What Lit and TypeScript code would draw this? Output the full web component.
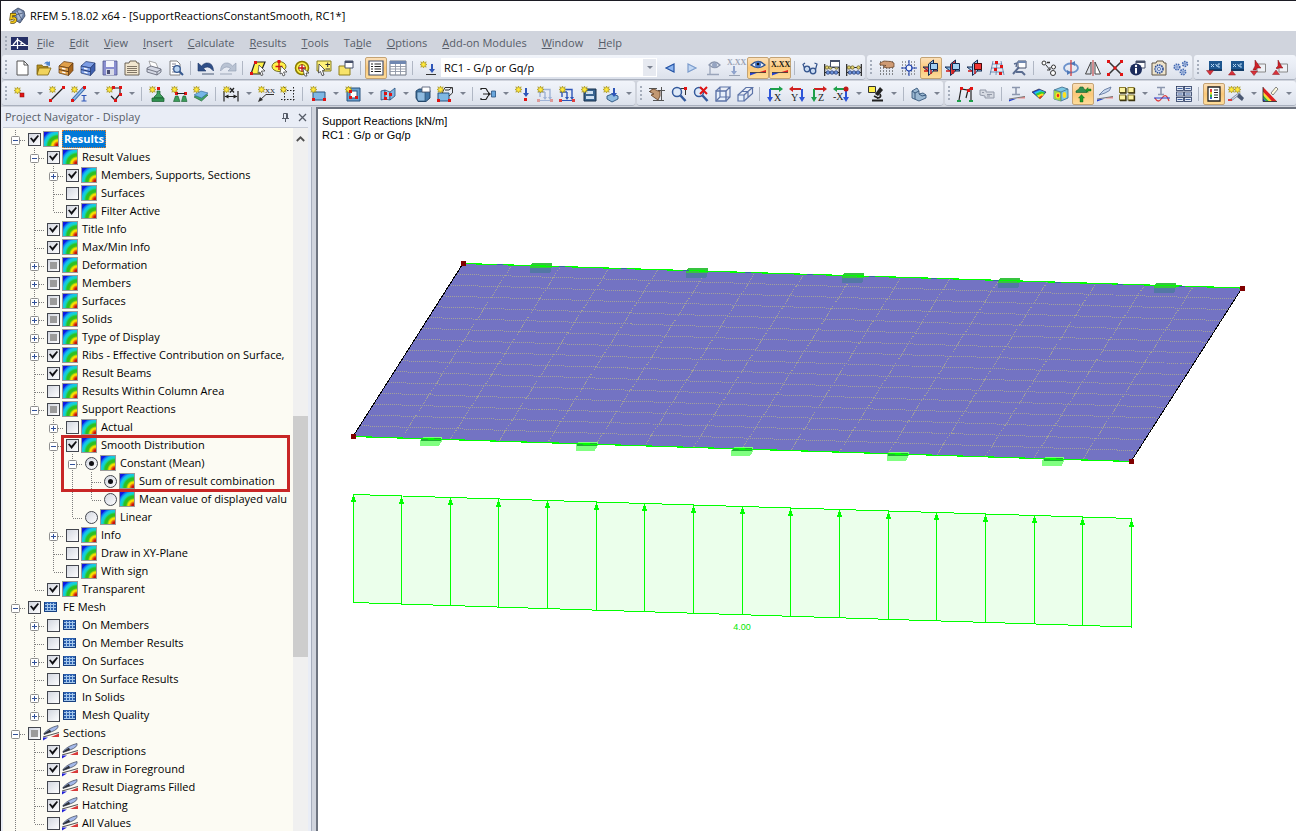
import { LitElement, html, svg, css, nothing } from "lit";
import { customElement, property, state } from "lit/decorators.js";
import { classMap } from "lit/directives/class-map.js";

/* ---------- icon building blocks (16 x 16 box) ---------- */

const star = (x: number, y: number) => svg`<path transform="translate(${x} ${y})" d="M3.5 0 L4.3 2 L6.2 .8 L5.2 2.8 L7 3.5 L5.2 4.3 L6.2 6.2 L4.3 5.2 L3.5 7 L2.7 5.2 L.8 6.2 L1.8 4.3 L0 3.5 L1.8 2.8 L.8 .8 L2.7 2 Z" fill="#ffe83c" stroke="#9c8a10" stroke-width=".6"/>`;
const node = (x: number, y: number) => svg`<rect x=${x} y=${y} width="3" height="3" fill="#e01414"/>`;
const line = (d: string, c = "#333", w = 1) => svg`<path d=${d} fill="none" stroke=${c} stroke-width=${w}/>`;
const fill = (d: string, c: string, s = "none", w = 1) => svg`<path d=${d} fill=${c} stroke=${s} stroke-width=${w}/>`;
const down = (x: number, y: number, c = "#2d55b8") => fill(`M${x - 1} ${y}h2v5h2l-3 4l-3-4h2z`, c);
const cone = (x: number, y: number) => fill(`M${x} ${y}l2 0l.5 3l3 3v1.500h-9v-1.500l3-3z`, "#2f8f4e", "#155c2c", 0.6);
const lens = svg`<circle cx="6" cy="6" r="4.500" fill="#dfeaf8" stroke="#33599c" stroke-width="1.500"/><path d="M9.500 9.500L14.500 15" stroke="#33599c" stroke-width="2.500"/>`;
const cabinet = (a: string, b: string, c: string) => svg`${fill("M1 6L6 1.500L15 3L10.500 8Z", a, c, 0.7)}${fill("M10.500 8L15 3V10.500L10.500 15.500Z", b, c, 0.7)}${fill("M1 6L10.500 8V15.500L1 13Z", a, c, 0.7)}${line("M1 9.500L10.500 11.700", c)}${line("M4 8.300L7.500 9.200M4 12L7.500 12.900", "#fff", 1.2)}`;
const grid = (c: string) => svg`<path d="M1 2H15M1 5H15M1 8H15M1 11H15M1 14H15" stroke=${c} stroke-dasharray="1 2"/>`;
const planes = (a: string, b: string) => svg`${fill("M0 7H11L15 11H5Z", a, "#132a52")}${fill("M5.500 4L10.500 0V11L5.500 15.500Z", b, "#132a52")}${fill("M7.500 3.500H14.500V9.500H7.500Z", "#a4d0f2", "#132a52")}${line("M1 11H5M8 10V14", "#d01515", 1.4)}`;
const load = (a: string, r: string) => svg`${line("M1 3.500H13V12M3 3V11M8 6V12M1 6H8", a, 1.4)}${fill("M6 11H10L8 14ZM11 11H15L13 14Z", a)}<path d="M0 14.500H16" stroke=${a}/><rect x="0" y="13" width="3" height="3" fill=${r}/><rect x="13" y="13" width="3" height="3" fill=${r}/>`;
const cam = (a: string, b: string, t: string, swap = false) => svg`${swap ? line("M2 3H12", a, 2) : line("M3 3H13", a, 2)}${swap ? line("M13 3V12", b, 2) : line("M3 3V12", b, 2)}${swap ? fill("M0 3L4 0V6Z", a) : fill("M16 3L12 0V6Z", a)}${swap ? fill("M10 11H16L13 16Z", b) : fill("M0 11H6L3 16Z", b)}<text x=${swap ? 2 : 7} y="15" font-size="10" font-family="Liberation Serif, serif" fill="#222">${t}</text>`;
const iso = (c: string) => svg`${fill("M1 5H11V15H1Z", "#e6effb", c, 1.4)}${line("M1 5L5 1H15L11 5M15 1V11L11 15M5 1V11H15M5 11L1 15", c, 1.2)}`;
const arrowUp = (x: number, y: number) => fill(`M${x} ${y}l3.500 4.500h-7z`, "#d8303a", "#8c1a20", 0.5);
const arrowDown = (x: number, y: number) => fill(`M${x} ${y}l3.500-4.500h-7z`, "#d8303a", "#8c1a20", 0.5);
const gear = (x: number, y: number, r: number, c: string) => svg`<circle cx=${x} cy=${y} r=${r} fill="#c8d8f2" stroke=${c} stroke-width="1.600" stroke-dasharray="1.500 .8"/><circle cx=${x} cy=${y} r=${r / 2.6} fill="#fff" stroke=${c} stroke-width=".7"/>`;
const beads = svg`${line("M.7 4V16M15.300 4V16M1 7.500H15M1 12.500H15", "#222", 1.2)}${[3, 6.5, 12.5].map((x) => svg`<circle cx=${x} cy="7.500" r="1.700" fill="#e4d470" stroke="#5b5320" stroke-width=".7"/>`)}${[4, 8, 12].map((x) => svg`<circle cx=${x} cy="12.500" r="1.800" fill="#6f95dc" stroke="#1d3470" stroke-width=".7"/>`)}`;
const eye = (c: string, i: string) => svg`${fill("M1 5Q8-2 15 5Q8 10 1 5Z", "#eef3fb", c, 1.3)}<circle cx="8" cy="4.500" r="3" fill=${i}/><circle cx="8" cy="4" r="1.300" fill="#111"/>`;
const wedge = svg`${fill("M0 15.500V12.500L8 12.500Z", "#2440d0")}${fill("M8 12.500L16 10V12.500Z", "#e02020")}${line("M0 12.500H16", "#333", 0.8)}`;
const xxx = (y: number, c: string) => svg`<text x="-1" y=${y} font-size="8" font-weight="700" font-family="Liberation Serif, serif" fill=${c}>X.XX</text>`;
const importBox = svg`<rect x="3" y="1" width="13" height="10" fill="#1d568f"/><path d="M5 4L8 7M8 4L5 7M9.500 4L11.500 7M14 4H12V7H14" fill="none" stroke="#b4d6f2"/><rect x="3" y="9" width="13" height="2" fill="#123c68"/>`;

const icons: Record<string, unknown> = {
  doc: svg`${fill("M3 1H10L14 5V15H3Z", "#fff", "#555")}${line("M10 1V5H14", "#555")}`,
  open: svg`${fill("M1 5H6L7 6.500H12V14H1Z", "#b48f1e", "#7a5f10", 0.8)}${fill("M3 8H15L12 15H1Z", "#f0d35c", "#7a5f10", 0.8)}${fill("M8 4Q10 .5 13 2L14 1V6L9.500 5L11 4Q10 3 8 4Z", "#4f86cf")}`,
  archive: cabinet("#e0a04a", "#a8661c", "#5e3710"),
  archiveBlue: cabinet("#7c9de4", "#3f5fae", "#20366f"),
  save: svg`${fill("M1 1H15V15H1Z", "#8a8fd0", "#50558e", 0.8)}<rect x="4" y="1" width="8" height="6" fill="#f4f5fb"/><rect x="4" y="9" width="8" height="6" fill="#d8dbe8"/><rect x="5" y="10" width="3" height="4" fill="#4b4f72"/>`,
  clip: svg`${fill("M1 3H5L6 1H12L13 3H15V15H1Z", "#f1e6cf", "#5e5547", 0.9)}${line("M3 6.500H13M3 8.500H13M3 10.500H13M3 12.500H13", "#74695a", 0.9)}`,
  print: svg`${fill("M3 1L10 3L12 8L5 7Z", "#fff", "#888", 0.7)}${fill("M1 8L5 6L15 9V12L11 15L1 12Z", "#d4d8e4", "#5c6070", 0.8)}${line("M1 9L11 12L15 9.500M11 12V15", "#5c6070", 0.8)}`,
  preview: svg`${fill("M2 1H9L12 4V15H2Z", "#fff", "#777", 0.9)}${line("M4 4H8M4 6.500H6M4 9H5M4 12H7", "#778", 0.9)}<circle cx="9" cy="9" r="3.300" fill="#bcd6f3" stroke="#35588f" stroke-width="1.300"/>${line("M11.500 11.500L15 15", "#35588f", 2)}`,
  undo: svg`${fill("M0 3V11H8L5.500 8.500Q10 5 14 9.500L15.500 11Q15 2 8 3Q5 4 3.500 6Z", "#2f4f88", "#1d3565", 0.6)}${line("M4 14H16", "#7d889e", 1.5)}`,
  redo: svg`${fill("M16 3V11H8L10.500 8.500Q6 5 2 9.500L.5 11Q1 2 8 3Q11 4 12.500 6Z", "#b9c3d3", "#8f9bb0", 0.6)}${line("M0 14H12", "#b4bccb", 1.5)}`,
  selPoly: svg`${fill("M5 2H15L10 14H1Z", "#fff24a", "#222", 1.2)}${node(4, 1)}${node(0, 12)}${fill("M9 5L15 11L11.500 11L13 15L11 15.500L10 12L8 13Z", "#fff", "#333", 0.7)}`,
  selEllipse: svg`<ellipse cx="7" cy="6.500" rx="7" ry="5" fill="#fff24a" stroke="#777020"/>${line("M7 3V10M3.500 6.500H10.500", "#d01515", 1.4)}${node(5.5, 0)}${fill("M9 6L15 12L11.500 12L13 15L11 16L10 13L8 14Z", "#fff", "#333", 0.7)}`,
  selRing: svg`<circle cx="8" cy="8" r="6.500" fill="#fff24a" stroke="#8a7c00" stroke-width="1.600"/><circle cx="8" cy="8" r="3.500" fill="#fff" stroke="#7a6c00"/>${line("M8 4.500V11.500M4.500 8H11.500", "#d01515", 1.4)}${fill("M9 8L15 13L12 13L13 16H11L10 14Z", "#fff", "#333", 0.7)}`,
  selPlus: svg`${fill("M1 1H15V11H1Z", "#fff27a", "#857c20")}${line("M9.500 4.500H14M11.700 2.500V7M9.500 9H14", "#333")}${fill("M3 4L9 10L6.500 10.500L8 15L6 15.500L4.500 11.500L2.500 13Z", "#fff", "#333", 0.8)}`,
  windows: svg`${fill("M1 6H12V15H1Z", "#f7e36a", "#8f7e1c")}${fill("M7 1H15V8H7Z", "#fff", "#46506a")}<rect x="7" y="1" width="8" height="2" fill="#46506a"/>`,
  list: svg`${fill("M1 1H15V15H1Z", "#fff", "#46506a", 1.2)}${line("M3 4H5M3 6.500H5M3 9H5M3 11.500H5M6.500 4H13M6.500 6.500H13M6.500 9H13M6.500 11.500H13", "#222", 1.1)}`,
  table: svg`${fill("M0 1H16V15H0Z", "#fff", "#6d7482")}<rect x="0" y="1" width="16" height="3" fill="#6f87b0"/>${line("M0 6.500H16M0 9H16M0 11.500H16M5.500 4V15M10.500 4V15", "#8f96a5", 0.9)}`,
  loadCase: svg`${star(0, 1)}${down(12, 4)}${line("M6 14.500H16", "#333")}`,
  prev: fill("M12 4V12L4 8Z", "#8db6f0", "#2353a5", 1.2),
  next: fill("M4 4V12L12 8Z", "#c2d8f4", "#7c9ccc", 1.2),
  eyeDim: svg`${fill("M3 5Q8-1 14 5Q9 10 3 5Z", "#dfe5ef", "#8b97ae", 1.3)}<circle cx="8.500" cy="5" r="2.500" fill="#96a5c2"/>${line("M4 6V15M1 14.500H13", "#9aa5ba", 1.3)}`,
  valDim: svg`${xxx(5, "#9aa3b4")}${down(6, 6, "#8fa3cc")}${line("M1 15.500H12", "#9aa3b4")}`,
  eye: svg`${eye("#2d4f8a", "#4677c8")}${wedge}`,
  val: svg`${xxx(7, "#221a10")}${wedge}`,
  glasses: svg`<circle cx="5" cy="9" r="2.800" fill="#c8daf2" stroke="#33538c" stroke-width="1.300"/><circle cx="11" cy="11" r="2.800" fill="#c8daf2" stroke="#33538c" stroke-width="1.300"/>${line("M2.500 8L1 4.500L3 3M13.500 9.500L15 4L12.500 3M7.500 10H8.500", "#33538c", 1.2)}`,
  abacusWin: svg`${beads}${fill("M6.500 .5H15.500V7H6.500Z", "#fff", "#46506a")}<rect x="6" y="0" width="10" height="2" fill="#46506a"/>`,
  abacus: beads,
  handGrid: svg`${grid("#222")}${fill("M1 3L5 1L12 1.500L15 3V7L9 8L4 7L7 5.500L1 5Z", "#cf9b74", "#5f3b20", 0.7)}`,
  snap: svg`${grid("#444")}<circle cx="8" cy="8" r="3" fill="#eef2fb" stroke="#1b3fae" stroke-width="1.200"/>${line("M8 0V5M8 11V16M0 8H5M11 8H16", "#1b3fae")}`,
  planeA: planes("#ef5050", "#9cc9ee"),
  planeB: planes("#7fb4e0", "#e04040"),
  planeC: svg`${planes("#9cc9ee", "#9cc9ee")}${fill("M7.500 3.500H14.500V9.500H7.500Z", "#f03434", "#4c0a0a")}`,
  pinGrid: svg`${line("M4 1L1 15M8 1L7 15M12 1L15 15M3 4H13M2 8H14M1 12H15", "#5c7fa8", 0.8)}${node(6, 1)}${node(11, 5)}${node(5, 8)}${node(10, 12)}`,
  wrench: svg`${fill("M7 1H15V8H7Z", "#fff", "#46506a")}<rect x="7" y="1" width="8" height="2" fill="#6f87b0"/>${line("M2 14L8 7M5 12H11L14 15", "#5a6c90", 2)}${line("M5 7L6 3L3 4", "#5a6c90", 1.4)}`,
  moveCopy: svg`<circle cx="3" cy="3" r="2" fill="#fff" stroke="#333"/>${line("M6 2.500H9", "#333", 1.4)}${line("M5 5L9 10M9 10V7M9 10H6", "#333")}<circle cx="12.500" cy="7" r="2" fill="#fff" stroke="#333"/><circle cx="12" cy="13" r="2.500" fill="#fff" stroke="#333"/>`,
  rotate: svg`<ellipse cx="8" cy="8" rx="7" ry="4.500" fill="none" stroke="#6d93cc" stroke-width="1.800"/>${line("M8 0V16", "#d03030", 1.2)}${fill("M4 10L8 12.500L4 15Z", "#4f79b8")}${fill("M12 1L8 3.500L12 6Z", "#4f79b8")}`,
  mirror: svg`${fill("M6 2V14H.5Z", "#dfe3ea", "#444")}${fill("M10 2V14H15.500Z", "#fff", "#444")}${line("M8 0V16", "#c03030")}`,
  cross: svg`${line("M2 2L14 14M14 2L2 14", "#333", 1.5)}${node(0, 0)}${node(13, 0)}${node(6.5, 6.5)}${node(0, 13)}${node(13, 13)}`,
  info: svg`${fill("M7 1H16V8H7Z", "#fff", "#46506a")}<rect x="7" y="1" width="9" height="2" fill="#46506a"/><circle cx="7" cy="9.500" r="6" fill="#1c2c5c"/>${line("M7 8V13.500", "#fff", 2)}<circle cx="7" cy="6" r="1.200" fill="#fff"/>`,
  gearWin: svg`${fill("M1 3H5L6 1H12L13 3H15V15H1Z", "#eee4cc", "#5e5547")}${gear(8, 9, 4, "#2d4c92")}`,
  gears: svg`${gear(4, 7, 2.8, "#4468b0")}${gear(12, 4, 2.4, "#4468b0")}${gear(10, 12, 2.6, "#4468b0")}`,
  expA: svg`${importBox}${arrowDown(4, 15)}`,
  expB: svg`${importBox}${arrowUp(4, 10.5)}`,
  expC: svg`${fill("M7 4H15.500V12H7Z", "#eef1f6", "#888")}${fill("M5 0L10 7L11 8H7L6 10H3L5 6Z", "#cf2028", "#7c1015", 0.5)}${arrowDown(4, 15.5)}`,
  expD: svg`${fill("M7 4H15.500V12H7Z", "#eef1f6", "#888")}${fill("M6 0L10 7L11 8H7L5 9L4 8L6 6Z", "#cf2028", "#7c1015", 0.5)}${arrowUp(4, 10)}`,

  nodeNew: svg`${star(0, 1)}<rect x="6" y="7" width="4" height="4" fill="#e01414" stroke="#8a0808" stroke-width=".5"/>`,
  lineNew: svg`${star(0, 0)}${line("M2 14L14 2", "#222", 1.2)}${node(0, 13)}${node(13, 0)}`,
  memberNew: svg`${line("M2 14L13 2", "#3f6ca8", 3.4)}${line("M2 14L13 2", "#8fbdec", 1.8)}${star(0, 0)}${node(0, 13)}${node(12, 0)}${line("M10.500 9.500H15.500M13 9.500V15M10.500 15H15.500", "#2d55b8", 1.2)}`,
  polyNew: svg`${star(0, 0)}${line("M6 2H14V8L9 14L5 10", "#222", 1.2)}${node(6, 0)}${node(13, 0)}${node(13, 7)}${node(8, 13)}`,
  support: svg`${star(0, 0)}${node(8, 1)}${fill("M8 5H11V8L14 11V12H5V11L8 8Z", "#3fa05f", "#155c2c", 0.7)}${fill("M3 12H15V15.500H3Z", "#2f8f4e", "#155c2c", 0.7)}`,
  supports: svg`${star(0, 0)}${node(4, 6)}${node(13, 6)}${line("M6 7.500H14", "#222")}${fill("M4.500 10H7L9 15.500H2.500Z", "#3b9c59", "#155c2c", 0.6)}${fill("M12 10H14.500L16 15.500H10.500Z", "#3b9c59", "#155c2c", 0.6)}`,
  surfSup: svg`${fill("M1 11L8 7L15 9L8.500 15Z", "#45a565", "#155c2c", 0.6)}${fill("M1 9L8 5L15 7L8.500 12Z", "#76b6e6", "#2a5f93", 0.6)}${star(0, 0)}`,
  dim: svg`${line("M1 5V15.500M15 5V15.500M2 10.500H14", "#222", 1.2)}${fill("M1.500 10.500L5.500 8.500V12.500ZM14.500 10.500L10.500 8.500V12.500Z", "#222")}${star(0, 0)}${line("M7 2L11 6.500M11 2L7 6.500", "#222", 1.3)}`,
  comment: svg`${star(0, 0)}<text x="7" y="7" font-size="7" font-family="Liberation Serif, serif" fill="#222">XX</text>${line("M16 8.500H8L2 14", "#333")}${fill("M0 16L2 11L5 14Z", "#333")}`,
  frame: svg`<path d="M4.500 1V16M13.500 1V16M1 4.500H16M1 13.500H16" stroke="#222" stroke-dasharray="1.500 1.500"/>${star(0, 0)}`,
  rectSurf: svg`${fill("M3 6H15V14H3Z", "#7fb8e4", "#28527f")}${star(0, 0)}${node(2, 12)}${node(13, 12)}`,
  opening: svg`${fill("M2 2H15V15H2Z", "#6ba2cf", "#28527f")}<rect x="5" y="5" width="7" height="7" fill="#fff" stroke="#28527f"/>${star(0, 0)}${node(4, 4)}${node(10, 10)}${node(4, 10)}`,
  book: svg`${fill("M1 5L5 4V13L1 14Z", "#8fc0ea", "#28527f", 0.8)}${fill("M5 4L10 6V14L5 13Z", "#a9d0f0", "#28527f", 0.8)}${fill("M10 6L15 2V10L10 14Z", "#7fb4e0", "#28527f", 0.8)}${node(4, 6)}${node(4, 11)}${node(9, 7)}`,
  solid: svg`${fill("M1 5L4 3H14L15 5V12L11 15.500H3L1 12Z", "#4378a8", "#1d3f63", 0.9)}${fill("M2 6H10V15H3L2 12Z", "#8fbbe0", "#1d3f63", 0.6)}${fill("M7 1H15V6H7Z", "#fff", "#46506a", 0.8)}`,
  solids: svg`${fill("M1 7H12V15H1Z", "#7fb8e4", "#28527f")}${line("M5 7L8 1.500H15.500V7L12 10M8 4H12L15 1.500", "#333")}${star(0, 0)}${node(11, 13)}${node(0, 13)}`,
  connect: svg`${line("M1 2.500H6M1 2V4M1 13.500H6M1 12V14M6 2.500L8 6M6 13.500L8 10M3 8H9", "#222", 1.2)}${fill("M8 5.500L11 8L8 10.500Z", "#222")}${fill("M11.500 5H15.500V11H11.500Z", "#6aa7dd", "#28527f", 0.8)}`,
  nodeLoad: svg`${star(0, 0)}${down(11, 2)}${node(9, 12)}`,
  lineLoad: svg`${load("#9fb3d6", "#dd9a9a")}${star(0, 0)}`,
  surfLoad: svg`${load("#2d55b8", "#e04040")}${star(0, 0)}`,
  solidLoad: svg`${fill("M3 3H15V15H3Z", "#39638f", "#16304d")}${fill("M5 5H12V8H5ZM5 10H13V13H5Z", "#cfe0f2")}${star(0, 0)}`,
  freeLoad: svg`${fill("M4 10L9 8L15 10V13L9 16L4 13Z", "#8fbbe0", "#28527f", 0.9)}${star(0, 0)}${down(11, 2)}`,
  hand: svg`${line("M0 2.500H8M0 5.500H4M12.500 1V15M9 4.500H16M4 14.500H15", "#555")}${fill("M2 4L5 3L9 5L11 5V10L9 14L6 12L2 9L5 8L1 6Z", "#c29873", "#5f3b20", 0.8)}`,
  zoomWin: svg`${line("M5 2.500H14.500V9", "#333")}${lens}${node(13, 1)}`,
  zoomX: svg`${lens}${line("M7 1L14 8M14 1L7 8", "#e01414", 2)}`,
  cube: iso("#5d74a8"),
  cubes: svg`${fill("M1 9H7V15H1Z", "#e6effb", "#5d74a8", 1.2)}${line("M1 9L9 1.500H15.500L7 9M15.500 1.500V7.500L7 15M5 5.500H11V11", "#5d74a8", 1.2)}`,
  viewX: cam("#1ea04a", "#2d55d8", "X"),
  viewY: cam("#d02020", "#2d55d8", "Y", true),
  viewZ: cam("#d02020", "#1ea04a", "Z"),
  viewNX: svg`${line("M2 3H12", "#1ea04a", 2)}${line("M13 3V12", "#2d55d8", 2)}${fill("M0 3L4 0V6Z", "#1ea04a")}${fill("M10 11H16L13 16Z", "#2d55d8")}<circle cx="13" cy="3" r="2.500" fill="#c01818"/><text x="0" y="14" font-size="10" font-family="Liberation Serif, serif" fill="#222">-X</text>`,
  scope: svg`${fill("M.5 .5H7.500V6.500H.5Z", "#fff04a", "#333")}${fill("M12 1L15 4L10 10L7 8Z", "#222")}${line("M12 8Q14 12 9 12M4 14.500H15M6 10L10 12", "#222", 1.8)}`,
  box3d: svg`${fill("M1 5L6 2L8 5V8L12 7L15 9V12L8 15L1 12Z", "#9bb8d2", "#38587c", 0.9)}${line("M1 5L4 7L8 5M4 7V13M8 8L11 10L15 9", "#38587c")}`,
  path: svg`${line("M2 14L4 3L11 4L14 2V14M11 4L9 12", "#222", 1.2)}${node(3, 1)}${node(10, 3)}${node(13, 1)}${fill("M0 14H4V16H0ZM12 14H16V16H12Z", "#1ea04a")}`,
  ghost: svg`${fill("M1 4H7V6H15V12H6V10L1 9Z", "#d6dae2", "#9299a8")}${line("M3 6.500H5M8 8.500H13M8 10H11", "#9299a8")}`,
  section: svg`${line("M3 1.500H11M7 2V8M3 8.500H11", "#8c97ae", 1.6)}${fill("M0 15.500V13.500L8 12.500Z", "#2440d0")}${fill("M8 12.500L16 10V12.500Z", "#e88a8a")}${line("M0 13L16 10.500", "#777")}`,
  rainbowSurf: svg`${fill("M1 6L8 3L15 6L9 13Z", "#1c42e0", "#222", 0.6)}${fill("M3 6.500L9 4L14 6L9 13Z", "#24c4e8")}${fill("M4.500 8L10 5.500L14 6.500L9 13Z", "#36cc30")}${fill("M6 9.500L11 7.500L13 8L9 13Z", "#ffe020")}${fill("M7.500 11.500L10.500 9.500L11.500 10L9 13Z", "#e83020")}`,
  rainbowCube: svg`${fill("M1 4L9 1L15 3V12L8 15L1 13Z", "#7cc8e4", "#3c6888", 0.8)}${fill("M1 4L8 6V15L1 13Z", "#9ad64c")}<ellipse cx="5" cy="9.500" rx="2.500" ry="3" fill="#ffe020"/><ellipse cx="5" cy="9.500" rx="1.200" ry="1.700" fill="#e83020"/><ellipse cx="11.500" cy="9" rx="1.800" ry="3" fill="#ffe020"/>${line("M1 4L8 6L15 3M8 6V15", "#3c6888", 0.7)}`,
  reaction: svg`${fill("M5 1H8L9 3L12 5V6.500H1V5L4 3Z", "#2f8f4e", "#155c2c", 0.6)}${fill("M10.500 4L13 1.500V3H16V5H13V6.500ZM6.500 8.500L9.500 12H8V16H5V12H3.500Z", "#1e9c28", "#0c5c12", 0.4)}`,
  pen: svg`${fill("M2 9Q6 3 14 1Q14 5 8 7Z", "#c8d8f0", "#667aa0", 0.9)}${fill("M0 15.500V13.500L8 12.500Z", "#2440d0")}${fill("M8 12.500L16 10V12.500Z", "#e88a8a")}${line("M0 13L16 10.500", "#777")}`,
  tiles: svg`${[0, 8.5].map((x) => [1.5, 9].map((y) => svg`<rect x=${x + 0.5} y=${y} width="6" height="5" fill="#fbf2a0" stroke="#8a7c30"/>${line(`M${x + 1} ${y + 5.5}h6v-5`, "#3c3610", 1.3)}`))}`,
  curve: svg`${line("M3 1.500H11M7 2V8M4 8.500H10", "#8c97ae", 1.6)}${line("M1 12Q4 18 8 12T15 15", "#e04040", 1.3)}${line("M0 12H16", "#2440d0")}`,
  tables: svg`${[0, 8].map((x) => [0, 5.5, 11].map((y) => svg`<rect x=${x + 0.5} y=${y + 0.5} width="7" height="4" fill="#e3eaf5" stroke="#26365c" stroke-width=".8"/>${line(`M${x + 1.5} ${y + 2.5}h5`, "#3f5f9e")}`))}`,
  panel: svg`${fill("M2 1H14V15H2Z", "#fff", "#222", 1.3)}${line("M5 3V6", "#e04040", 2)}${line("M5 6V8.500", "#f0d020", 2)}${line("M5 8.500V11", "#30b040", 2)}${line("M5 11V13", "#3a66c8", 2)}${line("M8 4H12M8 6.500H12M8 9H12M8 11.500H12", "#222")}`,
  wand: svg`${star(0, 0)}${star(6, 0)}${line("M3 14L12 7", "#8793ab", 2.5)}${line("M3 14L12 7", "#dfe5ef", 1)}${fill("M11 7L16 12L14 15L9 11Z", "#4b5873")}<rect x="0" y="13" width="4" height="2" fill="#e04040"/>`,
  palette: svg`${fill("M0 1L14 15.500H9L0 6Z", "#e02020")}${fill("M0 6L9 15.500H6L0 9Z", "#ffe020")}${fill("M0 9L6 15.500H3L0 12Z", "#30b040")}${fill("M0 12L3 15.500H0Z", "#2440d0")}${fill("M8 7L13 1L15 3L10 9Z", "#fffbe0", "#555", 0.7)}${line("M0 1V15.500H14", "#333", 0.9)}`,
};

type Item = [icon: string, label: string, flags?: string] | "|" | "combo";

const standardBar: Item[] = [
  ["doc", "New"], ["open", "Open"], ["archive", "Project manager"], ["archiveBlue", "Block manager"], ["save", "Save"],
  ["clip", "Model data"], ["print", "Print"], ["preview", "Print preview"], "|",
  ["undo", "Undo"], ["redo", "Redo"], "|",
  ["selPoly", "Select by polygon"], ["selEllipse", "Select by ellipse"], ["selRing", "Select by ring"], ["selPlus", "Add to selection"], ["windows", "New window"], "|",
  ["list", "Project navigator", "on"], ["table", "Tables"], "|",
  ["loadCase", "New load case"], "combo", ["prev", "Previous load case"], ["next", "Next load case"],
  ["eyeDim", "Show loads"], ["valDim", "Show load values"], ["eye", "Show results", "on"], ["val", "Show result values", "on"], "|",
  ["glasses", "Visibility"], ["abacusWin", "Calculation parameters"], ["abacus", "Calculate all"],
];
const editBar: Item[] = [
  ["handGrid", "Edit grid"], ["snap", "Snap"], ["planeA", "Plane XY", "on"], ["planeB", "Plane YZ"], ["planeC", "Plane XZ"],
  ["pinGrid", "Grid points"], ["wrench", "Work plane settings"], "|",
  ["moveCopy", "Move or copy"], ["rotate", "Rotate"], ["mirror", "Mirror"], ["cross", "Connect members"], ["info", "Object info"], ["gearWin", "Settings"], ["gears", "Generate"],
];
const exportBar: Item[] = [["expA", "Import tables"], ["expB", "Export tables"], ["expC", "Import model"], ["expD", "Export model"]];
const insertBar: Item[] = [
  ["nodeNew", "New node", "v"], ["lineNew", "New line"], ["memberNew", "New member", "v"], ["polyNew", "New polyline", "v"], "|",
  ["support", "Nodal support"], ["supports", "Line support"], ["surfSup", "Surface support"], "|",
  ["dim", "Dimension", "v"], ["comment", "Comment"], ["frame", "Guideline"], "|",
  ["rectSurf", "New surface", "v"], ["opening", "New opening", "v"], ["book", "New intersection", "v"], ["solid", "New solid"], ["solids", "Solid by boundary", "v"], "|",
  ["connect", "Connection", "v"], ["nodeLoad", "Nodal load"], ["lineLoad", "Line load"], ["surfLoad", "Surface load"], ["solidLoad", "Solid load"], ["freeLoad", "Free load", "v"],
];
const viewBar: Item[] = [
  ["hand", "Pan"], ["zoomWin", "Zoom window"], ["zoomX", "Cancel zoom"], ["cube", "Isometric view"], ["cubes", "Previous view"], "|",
  ["viewX", "View in X"], ["viewY", "View in Y"], ["viewZ", "View in Z"], ["viewNX", "View in -X", "v"], ["scope", "Visibility by window", "v"], "|",
  ["box3d", "Display mode", "v"],
];
const resultBar: Item[] = [
  ["path", "Deformation"], ["ghost", "Ghost model"], "|",
  ["section", "Member results"], ["rainbowSurf", "Surface results"], ["rainbowCube", "Solid results"], ["reaction", "Support reactions", "on"], ["pen", "Section results"],
  ["tiles", "Tile windows", "v"], ["curve", "Result diagram"], ["tables", "Result tables"], "|",
  ["panel", "Control panel", "on"], ["wand", "Smoothing", "v"], ["palette", "Colors", "v"],
];

/* ---------- toolbar ---------- */

@customElement("tool-bar")
class ToolBar extends LitElement {
  @property({ attribute: false }) items: Item[] = [];

  static styles = css`
    :host { display: flex; align-items: center; height: 25px; box-sizing: border-box; padding-top: 1px; overflow: hidden; border-bottom: 1px solid #a9b0be; border-radius: 3px; background: linear-gradient(#f1f4fa, #e9edf5 45%, #dce1eb); }
    .grip { flex: none; width: 3px; height: 16px; margin: 0 3px; background: repeating-linear-gradient(#a5adbb 0 2px, transparent 2px 4px); background-size: 2px 100%; background-repeat: no-repeat; }
    .tool { flex: none; width: 22px; height: 22px; padding: 2px; border: 1px solid transparent; border-radius: 2px; background: none; display: grid; place-items: center; }
    .on { border-color: #c4a374; background: linear-gradient(#fce0b8, #fbc878 50%, #fddc9a); }
    .icon { display: block; width: 16px; height: 16px; overflow: visible; }
    .more { flex: none; width: 13px; height: 22px; padding: 0; border: 0; background: none; display: grid; place-items: center; }
    .caret { width: 0; border: 3px solid transparent; border-top-color: #7b8290; border-bottom: 0; }
    .sep { flex: none; width: 1px; height: 14px; margin: 0 4px 0 3px; background: #b0b7c4; }
    .combo { position: relative; flex: none; display: flex; width: 216px; margin: 0 2px; background: #fff; }
    .select { appearance: none; flex: 1; height: 19px; padding: 0 20px 0 3px; border: 0; border-radius: 0; background: #fff; font: 11px "Open Sans", sans-serif; color: #000; }
    .drop { position: absolute; right: 1px; top: 1px; width: 13px; height: 17px; background: #e6e9f0; display: grid; place-items: center; pointer-events: none; }
  `;

  render() {
    return html`<span class="grip"></span>${this.items.map((item) => {
      if (item === "|") return html`<span class="sep"></span>`;
      if (item === "combo")
        return html`<span class="combo"><select class="select" aria-label="Load case"><option>RC1 - G/p or Gq/p</option></select><span class="drop"><span class="caret"></span></span></span>`;
      const [name, label, flag] = item;
      return html`<button class=${classMap({ tool: true, on: flag === "on" })} aria-label=${label}><svg class="icon" viewBox="0 0 16 16">${icons[name]}</svg></button>${flag === "v" ? html`<button class="more" aria-label="${label} options"><span class="caret"></span></button>` : nothing}`;
    })}`;
  }
}

/* ---------- navigator tree ---------- */

interface Entry {
  text: string;
  mark?: "on" | "off" | "mixed";
  radio?: boolean;
  open?: boolean;
  closed?: boolean;
  kids?: Entry[];
  framed?: boolean;
  selected?: boolean;
}
const on = (text: string, extra: Partial<Entry> = {}): Entry => ({ text, mark: "on", ...extra });
const off = (text: string, extra: Partial<Entry> = {}): Entry => ({ text, mark: "off", ...extra });
const mixed = (text: string, extra: Partial<Entry> = {}): Entry => ({ text, mark: "mixed", ...extra });
const closed = { closed: true };

const navigator: { kind: string; root: Entry }[] = [
  { kind: "rainbow", root: on("Results", { selected: true, kids: [
    on("Result Values", { kids: [on("Members, Supports, Sections", closed), off("Surfaces"), on("Filter Active")] }),
    on("Title Info"), on("Max/Min Info"),
    mixed("Deformation", closed), mixed("Members", closed), mixed("Surfaces", closed), mixed("Solids", closed), mixed("Type of Display", closed),
    on("Ribs - Effective Contribution on Surface,", closed), on("Result Beams"), off("Results Within Column Area"),
    mixed("Support Reactions", { kids: [
      off("Actual", closed),
      on("Smooth Distribution", { framed: true, kids: [
        on("Constant (Mean)", { radio: true, kids: [on("Sum of result combination", { radio: true }), off("Mean value of displayed valu", { radio: true })] }),
        off("Linear", { radio: true }),
      ] }),
      off("Info", closed), off("Draw in XY-Plane"), off("With sign"),
    ] }),
    on("Transparent"),
  ] }) },
  { kind: "mesh", root: on("FE Mesh", { kids: [off("On Members", closed), off("On Member Results"), on("On Surfaces", closed), off("On Surface Results"), off("In Solids", closed), off("Mesh Quality", closed)] }) },
  { kind: "pen", root: mixed("Sections", { kids: [on("Descriptions"), on("Draw in Foreground"), off("Result Diagrams Filled"), on("Hatching"), off("All Values")] }) },
];

@customElement("display-tree")
class DisplayTree extends LitElement {
  private serial = 0;

  static styles = css`
    :host { display: flex; flex: 1; min-height: 0; background: #fcfbf3; }
    .tree { flex: 1; min-width: 0; overflow: hidden; padding: 2px 0 0 3px; }
    .row { position: relative; display: flex; align-items: center; height: 18px; white-space: nowrap; }
    .guide { flex: none; width: 19px; height: 18px; }
    .box, .dot { appearance: none; flex: none; width: 13px; height: 13px; box-sizing: border-box; margin: 0 2px 0 3px; border: 1px solid #43464e; background: linear-gradient(135deg, #d3d7e0, #fdfdfe); display: grid; place-items: center; }
    .box:checked::before { content: ""; width: 9px; height: 8px; background: #101014; clip-path: polygon(0 40%, 16% 30%, 38% 58%, 86% 0, 100% 14%, 40% 100%); }
    .box:indeterminate::before { content: ""; width: 7px; height: 7px; background: #9b9b9b; }
    .dot { border-radius: 50%; }
    .dot:checked::before { content: ""; width: 5px; height: 5px; border-radius: 50%; background: #101014; }
    .pic { flex: none; width: 16px; height: 16px; box-sizing: border-box; margin-right: 3px; }
    .rainbow { border: 1px solid #9a9a9a; background: radial-gradient(circle at 100% 100%, #c81010 0 2px, #f08010 4px, #f4e000 5px 6px, #30c020 8px 10px, #10d8c0 12px, #18c0f0 14px, #1060f0 16px, #1018e0 17px); }
    .label { font: 11px/18px "Open Sans", sans-serif; color: #000; padding: 0 1px; }
    .selected { padding: 0 2px; background: #0078d7; color: #fff; font-weight: 700; outline: 1px dotted #e08030; outline-offset: -1px; }
    .mark { position: absolute; left: 55px; right: 3px; top: -1px; height: 57px; box-sizing: border-box; border: 3px solid #c82626; z-index: 1; pointer-events: none; }
    .bar { flex: none; width: 15px; background: #f0f0f0; display: flex; flex-direction: column; }
    .up { height: 22px; padding: 0; border: 0; background: none; display: grid; place-items: center; }
    .before { flex: 266; }
    .thumb { flex: 241; background: #cdcdcd; }
    .after { flex: 174; }
  `;

  private guide(vertical: "none" | "full" | "half", own: boolean, expander?: "+" | "-") {
    return html`<svg class="guide" viewBox="0 0 19 18" aria-hidden="true">
      ${vertical === "none" ? nothing : svg`<path d=${vertical === "full" ? "M9.500 0V18" : "M9.500 0V10"} stroke="#7d7d7d" stroke-dasharray="1 1"/>`}
      ${own ? svg`<path d="M10 10.500H19" stroke="#7d7d7d" stroke-dasharray="1 1"/>` : nothing}
      ${expander ? svg`<rect x="5.500" y="6.500" width="8" height="8" rx="1" fill="#fff" stroke="#8d8d8d"/><path d=${expander === "+" ? "M7 10.500H12M9.500 8V13" : "M7 10.500H12"} stroke="#31519a"/>` : nothing}
    </svg>`;
  }

  private picture(kind: string) {
    if (kind === "rainbow") return html`<span class="pic rainbow"></span>`;
    if (kind === "mesh")
      return html`<svg class="pic" viewBox="0 0 16 16"><rect x="1" y="3" width="13" height="10" fill="#2a5fae"/><path d="M2 5.500H13M2 8.500H13M2 11.500H13M4.500 4V12M7.500 4V12M10.500 4V12" stroke="#a5c8ec"/><path d="M1.500 3V12.500H13.500V3" fill="none" stroke="#174080"/></svg>`;
    return html`<svg class="pic" viewBox="0 0 16 16"><path d="M1 8.500Q5 3 15 .5Q16 4 8 7L1 9.500Z" fill="#a4b9ea" stroke="#4c5468" stroke-width=".8"/><path d="M1 8.500L7 4.500L8 7L1 9.500Z" fill="#2c3038"/><path d="M0 12L16 7.500" stroke="#555" stroke-width="1.200"/><path d="M0 12.500V15.500L5 12.500Z" fill="#2020d8"/><path d="M8 12L16 8.500V12Z" fill="#d83a3a"/></svg>`;
  }

  private rows(entry: Entry, kind: string, trail: boolean[], last: boolean): unknown {
    const id = `entry-${this.serial++}`;
    const depth = trail.length;
    return html`<div class="row" role="treeitem">
        ${trail.map((more) => this.guide(more ? "full" : "none", false))}
        ${this.guide(last ? "half" : "full", true, entry.kids ? "-" : entry.closed ? "+" : undefined)}
        ${entry.radio
          ? html`<input class="dot" type="radio" id=${id} name="level-${depth}" .checked=${entry.mark === "on"} />`
          : html`<input class="box" type="checkbox" id=${id} .checked=${entry.mark === "on"} .indeterminate=${entry.mark === "mixed"} />`}
        ${this.picture(kind)}<label for=${id} class=${classMap({ label: true, selected: !!entry.selected })}>${entry.text}</label>
        ${entry.framed ? html`<span class="mark"></span>` : nothing}
      </div>
      ${entry.kids?.map((kid, i) => this.rows(kid, kind, [...trail, !last], i === entry.kids!.length - 1))}`;
  }

  render() {
    this.serial = 0;
    return html`<div class="tree" role="tree">${navigator.map((branch) => this.rows(branch.root, branch.kind, [], false))}</div>
      <div class="bar"><button class="up" aria-label="Scroll up"><svg width="9" height="6" viewBox="0 0 9 6"><path d="M.8 5L4.500 1.300L8.200 5" fill="none" stroke="#505050" stroke-width="1.800"/></svg></button>
      <span class="before"></span><span class="thumb"></span><span class="after"></span></div>`;
  }
}

/* ---------- model view ---------- */

type Pt = [number, number];
const mix = (a: Pt, b: Pt, t: number): Pt => [a[0] + (b[0] - a[0]) * t, a[1] + (b[1] - a[1]) * t];
const seg = (a: Pt, b: Pt) => `M${a[0].toFixed(1)} ${a[1].toFixed(1)}L${b[0].toFixed(1)} ${b[1].toFixed(1)}`;

@customElement("model-view")
class ModelView extends LitElement {
  static styles = css`
    :host { display: block; position: relative; flex: 1; min-width: 0; overflow: hidden; background: #fff; border: solid #6e7480; border-width: 2px 0 0 2px; }
    .scene { display: block; width: 100%; height: 100%; }
    .caption { position: absolute; left: 4px; top: 5px; font: 11px/14px "Liberation Sans", sans-serif; color: #000; }
    .line { display: block; }
    .crisp { shape-rendering: crispEdges; }
    .value { font: 9px "Liberation Sans", sans-serif; fill: #00e800; }
  `;

  render() {
    const tl: Pt = [463, 263.5], tr: Pt = [1242, 288], br: Pt = [1131, 461.5], bl: Pt = [353, 436.5];
    const steps = Array.from({ length: 15 }, (_, i) => (i + 1) / 16);
    const mesh = steps.map((t) => seg(mix(tl, tr, t), mix(bl, br, t)) + seg(mix(tl, bl, t), mix(tr, br, t))).join("");
    const posts = Array.from({ length: 17 }, (_, i) => i / 16);
    const fifths = [0, 1, 2, 3, 4];
    return html`<div class="caption"><span class="line">Support Reactions [kN/m]</span><span class="line">RC1 : G/p or Gq/p</span></div>
      <svg class="scene" viewBox="318 109 978 722" preserveAspectRatio="xMinYMin meet">
        <g class="crisp">
          <path d="${seg(tl, tr)}L${br}L${bl}Z" fill="#7373c3"/>
          <path d=${mesh} fill="none" stroke="#a3a29a" stroke-dasharray="1 1"/>
          ${fifths.map((i) => {
            const x = 530 + i * 156, y = 263 + i * 5;
            return svg`<path d="M${x} ${y + 4}h21v4l-2 2h-19z" fill="#5378a5"/><path d="M${x + 3} ${y}h19v5h-22v-3z" fill="#36c43f"/>`;
          })}
          <path d=${seg(tl, tr)} stroke="#00ff00" stroke-width="1.200" fill="none"/>
          <path d=${seg(tl, tr)} stroke="#2f6f9a" fill="none" stroke-dasharray="6 56" stroke-dashoffset="-34"/>
          ${fifths.map((i) => {
            const x = 420 + i * 155.6, y = 437 + i * 5;
            return svg`<path d="M${x} ${y + 3}l3-3h19v4l-3 5h-19z" fill="#80ff80"/><path d="M${x + 2} ${y + 1}h19v3h-20z" fill="#21b034"/>`;
          })}
          <path d=${seg(bl, br)} stroke="#00ff00" stroke-width="1.200" fill="none"/>
          <path d="${seg(tl, bl)}${seg(tr, br)}" stroke="#000" fill="none"/>
          ${[tl, tr, br, bl].map(([x, y]) => svg`<rect x=${x - 2} y=${Math.floor(y) - 2} width="5" height="5" fill="#800000"/>`)}
          <path d="M353.500 494.500L1131.500 518.500V627L353.500 602.500Z" fill="#ebffeb" stroke="#00ff00"/>
          ${posts.map((t) => {
            const x = Math.floor(353 + 778.5 * t), y = Math.round(494 + 24.5 * t);
            return svg`<path d="M${x + 0.5} ${y}v108" stroke="#00ff00"/><path d="M${x} ${y + 1}h1v2h1v3h1v2h-5v-2h1v-3h1z" fill="#00ff00"/>`;
          })}
        </g>
        <text class="value" x="742" y="630" text-anchor="middle">4.00</text>
      </svg>`;
  }
}

/* ---------- application shell ---------- */

const menus: [string, string, string][] = [
  ["", "F", "ile"], ["", "E", "dit"], ["", "V", "iew"], ["", "I", "nsert"], ["", "C", "alculate"], ["", "R", "esults"], ["", "T", "ools"],
  ["Ta", "b", "le"], ["", "O", "ptions"], ["", "A", "dd-on Modules"], ["", "W", "indow"], ["", "H", "elp"],
];

@customElement("app-root")
class AppRoot extends LitElement {
  @state() private file = "SupportReactionsConstantSmooth, RC1*";

  static styles = css`
    :host { display: flex; flex-direction: column; height: 100vh; box-sizing: border-box; overflow: hidden; background: #d0d4dd; border: solid #1c1c24; border-width: 1px 0 0 1px; font: 11px/16px "Open Sans", sans-serif; }
    .title { flex: none; display: flex; align-items: center; gap: 5px; height: 30px; padding-left: 8px; background: #fff; color: #000; }
    .app { overflow: visible; }
    .menu { flex: none; display: flex; align-items: center; height: 24px; padding-left: 4px; }
    .grip { width: 2px; height: 14px; margin-right: 4px; background: repeating-linear-gradient(#a2a9b6 0 2px, transparent 2px 4px); }
    .entry { padding: 0; margin-left: 15px; border: 0; background: none; font: inherit; color: #565c68; }
    .logo + .entry { margin-left: 9px; }
    .bars { flex: none; display: flex; gap: 2px; height: 26px; padding-left: 1px; overflow: hidden; }
    .stretch { flex: 1; }
    .work { flex: 1; display: flex; min-height: 0; gap: 4px; }
    .panel { flex: none; width: 311px; box-sizing: border-box; display: flex; flex-direction: column; background: #e9edf6; border-right: 1px solid #a7aebd; padding: 0 3px 0 2px; }
    .head { flex: none; display: flex; align-items: center; height: 20px; gap: 6px; padding-left: 2px; color: #565c68; border-bottom: 1px solid #c5cad6; }
    .name { flex: 1; }
    .act { width: 11px; height: 11px; padding: 0; border: 0; background: none; }
    .glyph { display: block; }
  `;

  render() {
    return html`
      <div class="title">
        <svg class="app" width="16" height="16" viewBox="0 0 16 16"><path d="M3 4L9 0L15 3L16 8L11 15L6 12Z" fill="#6e83a8" stroke="#36435e" stroke-width=".8"/><path d="M7 4L11 2L14 5L12 11L9 12Z" fill="#a9b8d2"/><path d="M8 3L13 12M6 7L14 5" stroke="#36435e" stroke-width=".7"/><path d="M7 6.500H2.500L2 10.500Q6.500 9 6.500 12Q6 15 1.500 14" fill="none" stroke="#5d4a08" stroke-width="3"/><path d="M7 6.500H2.500L2 10.500Q6.500 9 6.500 12Q6 15 1.500 14" fill="none" stroke="#f2c81e" stroke-width="1.700"/></svg>
        <span>RFEM 5.18.02 x64 - [${this.file}]</span>
      </div>
      <nav class="menu">
        <span class="grip"></span>
        <svg class="logo" width="17" height="13" viewBox="0 0 17 13"><rect width="17" height="13" fill="#252f66"/><path d="M0 8.500H17M6.500 1V12M2 8L6.500 2.500L15 8.500M10 4V9" fill="none" stroke="#fff" stroke-width="1.200"/></svg>
        ${menus.map(([a, u, b]) => html`<button class="entry">${a}<u>${u}</u>${b}</button>`)}
      </nav>
      <div class="bars"><tool-bar .items=${standardBar}></tool-bar><tool-bar .items=${editBar}></tool-bar><tool-bar class="stretch" .items=${exportBar}></tool-bar></div>
      <div class="bars"><tool-bar .items=${insertBar}></tool-bar><tool-bar .items=${viewBar}></tool-bar><tool-bar class="stretch" .items=${resultBar}></tool-bar></div>
      <div class="work">
        <section class="panel">
          <div class="head"><span class="name">Project Navigator - Display</span>
            <button class="act" aria-label="Pin"><svg class="glyph" width="11" height="11" viewBox="0 0 11 11"><path d="M3.500 1.500H7.500V6.500H3.500ZM6.500 2V6M2 6.500H9M5.500 7V10" fill="none" stroke="#565c68"/></svg></button>
            <button class="act" aria-label="Close"><svg class="glyph" width="11" height="11" viewBox="0 0 11 11"><path d="M2 2L9 9M9 2L2 9" stroke="#565c68" stroke-width="1.300"/></svg></button>
          </div>
          <display-tree></display-tree>
        </section>
        <model-view></model-view>
      </div>`;
  }
}
